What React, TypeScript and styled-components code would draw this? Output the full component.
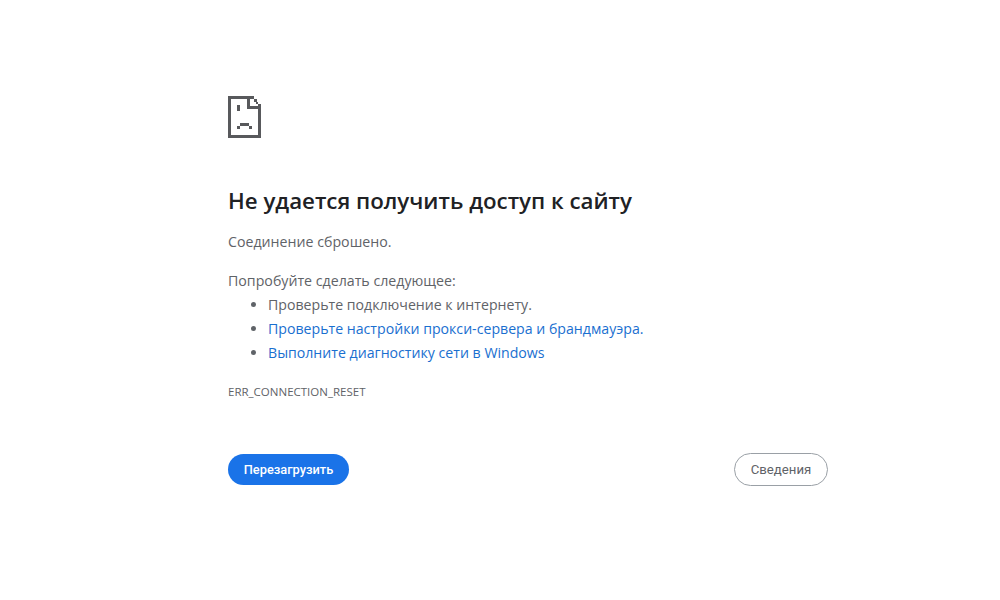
import React from "react";
import styled, { createGlobalStyle } from "styled-components";

const GlobalStyle = createGlobalStyle`
  html, body {
    margin: 0;
    padding: 0;
    background: #fff;
    font-family: "Open Sans", "Noto Sans", "Liberation Sans", sans-serif;
  }
`;

const Page = styled.main`
  box-sizing: border-box;
  width: 1000px;
  height: 600px;
  padding: 96px 172px 0 228px;
  overflow: hidden;
`;

const SadFile = styled.svg`
  display: block;
  width: 33px;
  height: 42px;
  shape-rendering: crispEdges;
`;

const Title = styled.h1`
  margin: 47px 0 0;
  font-size: 22.3px;
  line-height: 32px;
  font-weight: 600;
  color: #202124;
`;

const Message = styled.p`
  margin: 13px 0 0;
  font-size: 14.2px;
  line-height: 24px;
  color: #5f6368;
`;

const Hint = styled(Message)`
  margin-top: 15px;
`;

const Suggestions = styled.ul`
  margin: 0;
  padding: 0 0 0 40px;
  list-style: disc;
  font-size: 14.15px;
  line-height: 24px;
  color: #5f6368;
`;

const Suggestion = styled.li<{ $link?: boolean }>`
  color: ${(p) => (p.$link ? "#1a6fd0" : "#5f6368")};
  &::marker {
    color: #5f6368;
  }
`;

const ErrorCode = styled.div`
  margin-top: 19px;
  font-size: 11.5px;
  line-height: 16px;
  color: #5f6368;
`;

const Actions = styled.div`
  display: flex;
  justify-content: space-between;
  align-items: center;
  margin-top: 53px;
`;

const ReloadButton = styled.button`
  width: 121px;
  height: 31px;
  padding: 0;
  border: none;
  border-radius: 16px;
  background: #1a73e8;
  color: #fff;
  font-family: Roboto, "Liberation Sans", sans-serif;
  font-size: 12.8px;
  font-weight: 500;
`;

const DetailsButton = styled.button`
  box-sizing: border-box;
  width: 94px;
  height: 33px;
  padding: 0;
  border: 1px solid #9aa0a6;
  border-radius: 17px;
  background: #fff;
  color: #5f6368;
  font-family: Roboto, "Liberation Sans", sans-serif;
  font-size: 13.2px;
  font-weight: 400;
`;

export default function App() {
  return (
    <>
      <GlobalStyle />
      <Page>
        <SadFile viewBox="0 0 33 42" aria-hidden="true">
          <g fill="#58595c">
            <rect x="0" y="0" width="26" height="3" />
            <rect x="0" y="0" width="3" height="42" />
            <rect x="0" y="39" width="33" height="3" />
            <rect x="30" y="8" width="3" height="34" />
            <rect x="19" y="0" width="3" height="13" />
            <rect x="19" y="10" width="14" height="3" />
            <rect x="26" y="3" width="3" height="3" />
            <rect x="28" y="6" width="2" height="2" />
            <rect x="9" y="9" width="3" height="6" />
            <rect x="12" y="27" width="9" height="3" />
            <rect x="9" y="30" width="3" height="3" />
            <rect x="21" y="30" width="3" height="3" />
          </g>
        </SadFile>
        <Title>Не удается получить доступ к сайту</Title>
        <Message>Соединение сброшено.</Message>
        <Hint>Попробуйте сделать следующее:</Hint>
        <Suggestions>
          <Suggestion>Проверьте подключение к интернету.</Suggestion>
          <Suggestion $link>Проверьте настройки прокси-сервера и брандмауэра.</Suggestion>
          <Suggestion $link>Выполните диагностику сети в Windows</Suggestion>
        </Suggestions>
        <ErrorCode>ERR_CONNECTION_RESET</ErrorCode>
        <Actions>
          <ReloadButton>Перезагрузить</ReloadButton>
          <DetailsButton>Сведения</DetailsButton>
        </Actions>
      </Page>
    </>
  );
}
